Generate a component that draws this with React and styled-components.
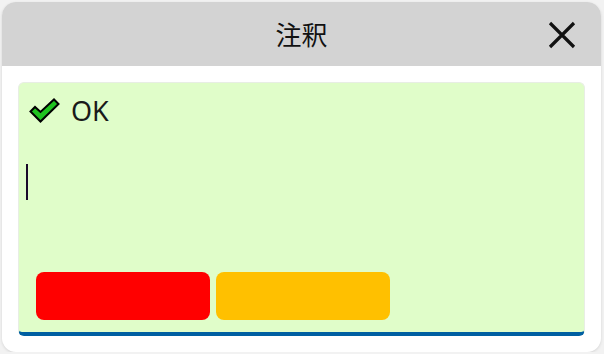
import React from "react"
import styled, { createGlobalStyle } from "styled-components"

const GlobalStyle = createGlobalStyle`
	html, body {
		margin: 0;
		padding: 0;
		background: #f2f2f2;
		font-family: "Noto Sans", "Noto Sans CJK JP", sans-serif;
	}
`

const Dialog = styled.div`
	box-sizing: border-box;
	margin: 2px 0 0 2px;
	width: 599px;
	height: 350px;
	background: #fff;
	border-radius: 14px;
	overflow: hidden;
	box-shadow: 0 1px 3px rgba(0, 0, 0, 0.12);
	display: flex;
	flex-direction: column;
`

const Header = styled.div`
	position: relative;
	height: 64px;
	background: #d3d3d3;
	display: flex;
	align-items: center;
	justify-content: center;
	flex-shrink: 0;
`

const Title = styled.h1`
	margin: 0;
	font-family: "Noto Sans CJK JP", sans-serif;
	font-weight: 400;
	font-size: 26px;
	line-height: 1;
	color: #111;
`

const CloseButton = styled.button`
	position: absolute;
	right: 25px;
	top: 19px;
	width: 28px;
	height: 28px;
	padding: 0;
	border: none;
	background: transparent;
	display: flex;
	align-items: center;
	justify-content: center;
`

const Body = styled.div`
	flex: 1;
	padding: 16px;
	display: flex;
`

const Panel = styled.div`
	box-sizing: border-box;
	flex: 1;
	background: #e0fdc9;
	border: 1px solid #e8eee4;
	border-bottom: 4px solid #005fa1;
	border-radius: 6px;
	display: flex;
	flex-direction: column;
	padding: 13px 17px 12px 7px;
`

const Status = styled.div`
	display: flex;
	align-items: center;
	gap: 11px;
	padding-left: 3px;
	font-size: 27px;
	line-height: 1;
	color: #1a1a1a;
	height: 28px;
`

const Editor = styled.div`
	flex: 1;
	padding-top: 40px;
`

const Caret = styled.span`
	display: block;
	width: 2px;
	height: 36px;
	background: #1a0a2a;
`

const Actions = styled.div`
	display: flex;
	gap: 6px;
	padding-left: 10px;
`

const ActionButton = styled.button`
	width: 174px;
	height: 48px;
	border: none;
	border-radius: 8px;
	background: ${({ color }) => color};
`

const CheckIcon = () => (
	<svg width="31" height="25" viewBox="0 0 31 25">
		<path
			d="M1.5 13.5 L6 9 L11.5 14 L25 1.5 L29.5 6 L11.5 23.5 Z"
			fill="#1fc21f"
			stroke="#000"
			strokeWidth="2"
			strokeLinejoin="miter"
		/>
	</svg>
)

const CloseIcon = () => (
	<svg width="28" height="28" viewBox="0 0 28 28">
		<path d="M2 2 L26 26 M26 2 L2 26" stroke="#111" strokeWidth="3.2" />
	</svg>
)

export default function App() {
	return (
		<>
			<GlobalStyle />
			<Dialog>
				<Header>
					<Title>注釈</Title>
					<CloseButton aria-label="close">
						<CloseIcon />
					</CloseButton>
				</Header>
				<Body>
					<Panel>
						<Status>
							<CheckIcon />
							<span>OK</span>
						</Status>
						<Editor>
							<Caret />
						</Editor>
						<Actions>
							<ActionButton color="#ff0000" />
							<ActionButton color="#ffc000" />
						</Actions>
					</Panel>
				</Body>
			</Dialog>
		</>
	)
}
